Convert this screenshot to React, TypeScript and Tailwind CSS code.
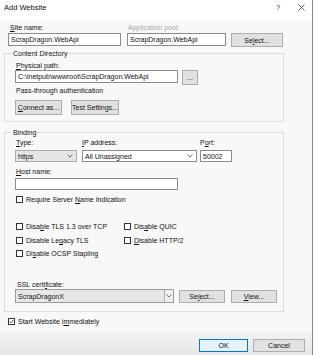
import React from "react";

const Chevron = () => (
  <svg width="6" height="4" viewBox="0 0 6 4">
    <path d="M0.5 0.5 L3 3.2 L5.5 0.5" fill="none" stroke="#606060" strokeWidth="0.9" />
  </svg>
);

const Btn = ({ className, children }: { className: string; children: React.ReactNode }) => (
  <div className={`flex items-center justify-center bg-[#e1e1e1] border border-[#adadad] text-[#111] ${className}`}>
    {children}
  </div>
);

const Check = ({ checked, label }: { checked?: boolean; label: React.ReactNode }) => (
  <div className="flex items-center h-[9px]">
    <div className="w-[7px] h-[7px] border border-[#333] bg-white flex items-center justify-center">
      {checked && (
        <svg width="5" height="5" viewBox="0 0 5 5">
          <path d="M0.6 2.6 L1.9 3.9 L4.4 1" fill="none" stroke="#222" strokeWidth="0.8" />
        </svg>
      )}
    </div>
    <span className="ml-[3px]">{label}</span>
  </div>
);

export default function App() {
  return (
    <div className="w-[315px] h-[355px] bg-white overflow-hidden font-['Liberation_Sans',Arial,sans-serif] text-[7px] leading-[9px] text-[#111]">
      <div className="w-[313px] h-[355px] border-r border-[#8a8a8a] flex flex-col">
        {/* Title bar */}
        <div className="h-[20px] bg-white flex items-start pt-[3px] pl-[4px] shrink-0">
          <span className="text-[7.5px]">Add Website</span>
          <span className="ml-auto w-[8px] text-center text-[7.5px] text-[#333]">?</span>
          <div className="ml-[16px] mr-[7px] mt-[1px] w-[7px] h-[7px]">
            <svg width="7" height="7" viewBox="0 0 7 7">
              <path d="M0.5 0.5 L6.5 6.5 M6.5 0.5 L0.5 6.5" stroke="#333" strokeWidth="0.8" />
            </svg>
          </div>
        </div>

        {/* Body */}
        <div className="flex-1 bg-[#f8f8f8] flex flex-col pt-[3px]">
          {/* Row 1 */}
          <div className="flex pl-[8px]">
            <div className="w-[113px] flex flex-col">
              <div className="h-[10px] pl-[2px]">
                <u>S</u>ite name:
              </div>
              <div className="h-[13px] bg-white border border-[#8c8c8c] flex items-center pl-[2px]">ScrapDragon.WebApi</div>
            </div>
            <div className="w-[99px] ml-[6px] flex flex-col">
              <div className="h-[10px] pl-[1px] text-[#a8a8a8]">Application pool:</div>
              <div className="h-[13px] bg-white border border-[#8c8c8c] flex items-center pl-[2px]">ScrapDragon.WebApi</div>
            </div>
            <Btn className="ml-[5px] mt-[10px] w-[52px] h-[14px]">
              Se<u>l</u>ect...
            </Btn>
          </div>

          {/* Content Directory */}
          <div className="relative ml-[4px] mt-[6px] w-[280px] border border-[#dcdcdc] pt-[7px] pl-[10px] pb-[6px]">
            <span className="absolute top-[-5px] left-[7px] px-[1px] bg-[#f8f8f8]">Content Directory</span>
            <div className="h-[9px] pl-[1px]">
              <u>P</u>hysical path:
            </div>
            <div className="flex items-start">
              <div className="w-[163px] h-[13px] bg-white border border-[#8c8c8c] flex items-center pl-[2px]">
                C:\inetpub\wwwroot\ScrapDragon.WebApi
              </div>
              <Btn className="ml-[4px] w-[16px] h-[15px]">...</Btn>
            </div>
            <div className="mt-[1px] h-[9px] pl-[1px]">Pass-through authentication</div>
            <div className="flex mt-[5px]">
              <Btn className="w-[47px] h-[15px]">
                <u>C</u>onnect as...
              </Btn>
              <Btn className="ml-[9px] w-[48px] h-[15px]">Test Settings...</Btn>
            </div>
          </div>

          {/* Binding */}
          <div className="relative ml-[4px] mt-[10px] w-[280px] border border-[#dcdcdc] pt-[5px] pl-[10px] pb-[8px]">
            <span className="absolute top-[-5px] left-[7px] px-[1px] bg-[#f8f8f8]">Binding</span>
            <div className="flex">
              <div className="w-[62px] flex flex-col">
                <div className="h-[12px] pl-[1px]">
                  <u>T</u>ype:
                </div>
                <div className="h-[12px] bg-[#e5e5e5] border border-[#acacac] flex items-center pl-[2px] pr-[3px]">
                  <span>https</span>
                  <span className="ml-auto flex">
                    <Chevron />
                  </span>
                </div>
              </div>
              <div className="w-[115px] ml-[5px] flex flex-col">
                <div className="h-[12px]">
                  <u>I</u>P address:
                </div>
                <div className="h-[12px] bg-white border border-[#8c8c8c] flex items-center pl-[2px] pr-[3px]">
                  <span>All Unassigned</span>
                  <span className="ml-auto flex">
                    <Chevron />
                  </span>
                </div>
              </div>
              <div className="w-[32px] ml-[3px] flex flex-col">
                <div className="h-[12px]">
                  P<u>o</u>rt:
                </div>
                <div className="h-[12px] bg-white border border-[#8c8c8c] flex items-center pl-[2px]">50002</div>
              </div>
            </div>
            <div className="mt-[5px] h-[11px] pl-[1px]">
              <u>H</u>ost name:
            </div>
            <div className="w-[163px] h-[12px] bg-white border border-[#8c8c8c]" />
            <div className="mt-[5px] pl-[1px]">
              <Check
                label={
                  <>
                    Require Server <u>N</u>ame Indication
                  </>
                }
              />
            </div>
            <div className="mt-[18px] pl-[1px] flex">
              <div className="w-[108px] flex flex-col">
                <Check
                  label={
                    <>
                      Disa<u>b</u>le TLS 1.3 over TCP
                    </>
                  }
                />
                <div className="mt-[5px]">
                  <Check
                    label={
                      <>
                        Disable Le<u>g</u>acy TLS
                      </>
                    }
                  />
                </div>
                <div className="mt-[4px]">
                  <Check
                    label={
                      <>
                        Di<u>s</u>able OCSP Stapling
                      </>
                    }
                  />
                </div>
              </div>
              <div className="flex flex-col">
                <Check
                  label={
                    <>
                      Dis<u>a</u>ble QUIC
                    </>
                  }
                />
                <div className="mt-[5px]">
                  <Check
                    label={
                      <>
                        <u>D</u>isable HTTP/2
                      </>
                    }
                  />
                </div>
              </div>
            </div>
            <div className="mt-[22px] h-[9px] pl-[2px]">
              SSL certi<u>f</u>icate:
            </div>
            <div className="flex items-start">
              <div className="w-[159px] h-[14px] bg-[#e6e6e6] border border-[#9a9a9a] flex items-stretch">
                <div className="flex-1 flex items-center pl-[2px]">ScrapDragonX</div>
                <div className="w-[9px] border-l border-[#b0b0b0] bg-[#f0f0f0] flex items-center justify-center">
                  <Chevron />
                </div>
              </div>
              <Btn className="ml-[5px] mt-[1px] w-[46px] h-[13px]">
                Se<u>l</u>ect...
              </Btn>
              <Btn className="ml-[6px] mt-[1px] w-[46px] h-[13px]">
                <u>V</u>iew...
              </Btn>
            </div>
          </div>

          <div className="mt-[5px] pl-[8px]">
            <Check
              checked
              label={
                <>
                  Start Website i<u>m</u>mediately
                </>
              }
            />
          </div>

          {/* Footer */}
          <div className="flex-1 mt-[5px] bg-gradient-to-b from-[#f4f4f4] to-[#e6e6e6] flex items-end justify-end pb-[3px] pr-[7px]">
            <div className="w-[49px] h-[13px] border border-[#0078d7] bg-[#e5f1fb] flex items-center justify-center">OK</div>
            <Btn className="ml-[5px] w-[52px] h-[13px]">Cancel</Btn>
          </div>
        </div>
      </div>
    </div>
  );
}
